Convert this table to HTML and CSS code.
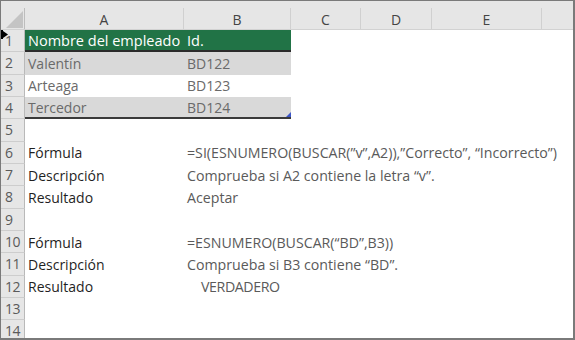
FILE: index.html
```html
<!DOCTYPE html>
<html lang="es">
<head>
<meta charset="utf-8">
<title>Hoja</title>
<link rel="stylesheet" href="styles.css">
</head>
<body>
<div class="sheet">
  <div class="topstrip"></div>
  <div class="row colhead">
    <div class="corner"><span class="tri"></span></div>
    <div class="ch">A</div>
    <div class="ch">B</div>
    <div class="ch">C</div>
    <div class="ch">D</div>
    <div class="ch">E</div>
    <div class="ch last"></div>
  </div>

  <div class="row">
    <div class="rh">1</div>
    <div class="cell hdr">Nombre del empleado</div>
    <div class="cell hdr">Id.</div>
  </div>
  <div class="row">
    <div class="rh">2</div>
    <div class="cell band">Valentín</div>
    <div class="cell band">BD122</div>
  </div>
  <div class="row">
    <div class="rh">3</div>
    <div class="cell plain">Arteaga</div>
    <div class="cell plain">BD123</div>
  </div>
  <div class="row">
    <div class="rh">4</div>
    <div class="cell band lastrow">Tercedor</div>
    <div class="cell band lastrow">BD124<span class="handle"></span></div>
  </div>
  <div class="row">
    <div class="rh">5</div>
  </div>
  <div class="row">
    <div class="rh">6</div>
    <div class="cell label">Fórmula</div>
    <div class="cell val">=SI(ESNUMERO(BUSCAR(”v”,A2)),”Correcto”, “Incorrecto”)</div>
  </div>
  <div class="row">
    <div class="rh">7</div>
    <div class="cell label">Descripción</div>
    <div class="cell val">Comprueba si A2 contiene la letra “v”.</div>
  </div>
  <div class="row">
    <div class="rh">8</div>
    <div class="cell label">Resultado</div>
    <div class="cell val">Aceptar</div>
  </div>
  <div class="row">
    <div class="rh">9</div>
  </div>
  <div class="row">
    <div class="rh">10</div>
    <div class="cell label">Fórmula</div>
    <div class="cell val">=ESNUMERO(BUSCAR(“BD”,B3))</div>
  </div>
  <div class="row">
    <div class="rh">11</div>
    <div class="cell label">Descripción</div>
    <div class="cell val">Comprueba si B3 contiene “BD”.</div>
  </div>
  <div class="row">
    <div class="rh">12</div>
    <div class="cell label">Resultado</div>
    <div class="cell val indent">VERDADERO</div>
  </div>
  <div class="row">
    <div class="rh">13</div>
  </div>
  <div class="row">
    <div class="rh">14</div>
  </div>

  <svg class="cursor" width="8" height="9" viewBox="0 0 8 9">
    <rect x="0" y="0" width="2" height="9" fill="#000"/>
    <path d="M2 1 L7 4.5 L2 8 Z" fill="#000"/>
  </svg>
</div>
</body>
</html>
```

FILE: styles.css
```css
html, body {
  margin: 0;
  padding: 0;
  background: #fff;
}

.sheet {
  position: relative;
  width: 575px;
  height: 340px;
  box-sizing: border-box;
  border: solid #7a7a7a;
  border-width: 1px 2px 2px 1px;
  overflow: hidden;
  font-family: "Open Sans", "Noto Sans", sans-serif;
  background: #fff;
}

.topstrip {
  height: 7px;
  background: #e6e6e6;
}

.row {
  display: grid;
  grid-template-columns: 24px 159px 107px 70px 71px 110px 1fr;
  height: 22.33px;
}

.colhead {
  height: 22px;
  background: #e6e6e6;
  border-bottom: 1px solid #d2d2d2;
  box-sizing: border-box;
}

.corner {
  position: relative;
  border-right: 1px solid #bdbdbd;
}

.tri {
  position: absolute;
  left: 5px;
  top: 3px;
  width: 0;
  height: 0;
  border-style: solid;
  border-width: 0 0 17px 17px;
  border-color: transparent transparent #c4c4c4 transparent;
}

.ch {
  border-right: 1px solid #d0d0d0;
  color: #444;
  font-size: 14px;
  display: flex;
  align-items: center;
  justify-content: center;
  padding-top: 1px;
}

.ch.last {
  border-right: none;
}

.rh {
  background: #e6e6e6;
  border-right: 1px solid #b9b9b9;
  border-bottom: 1px solid #cdcdcd;
  box-sizing: border-box;
  color: #5a5a5a;
  font-size: 14px;
  display: flex;
  align-items: center;
  padding-left: 4px;
  letter-spacing: -0.5px;
}

.cell {
  display: flex;
  align-items: center;
  white-space: nowrap;
  box-sizing: border-box;
  padding-left: 3px;
  font-size: 14px;
}

.hdr {
  background: #217346;
  color: #fff;
  border-bottom: 2px solid #2b2b2b;
  padding-top: 1px;
  font-size: 14.5px;
}

.band {
  background: #d9d9d9;
  color: #6a6a6a;
}

.plain {
  color: #6a6a6a;
}

.lastrow {
  position: relative;
  border-bottom: 2px solid #3a3a3a;
}

.handle {
  position: absolute;
  right: 0;
  bottom: 0;
  width: 0;
  height: 0;
  border-style: solid;
  border-width: 0 0 5px 5px;
  border-color: transparent transparent #3d56c8 transparent;
}

.label {
  color: #1f1f1f;
}

.val {
  color: #5a5a5a;
  overflow: visible;
  font-size: 14.2px;
}

.indent {
  padding-left: 17px;
  letter-spacing: -0.4px;
}

.cursor {
  position: absolute;
  left: 0;
  top: 29px;
}
```
